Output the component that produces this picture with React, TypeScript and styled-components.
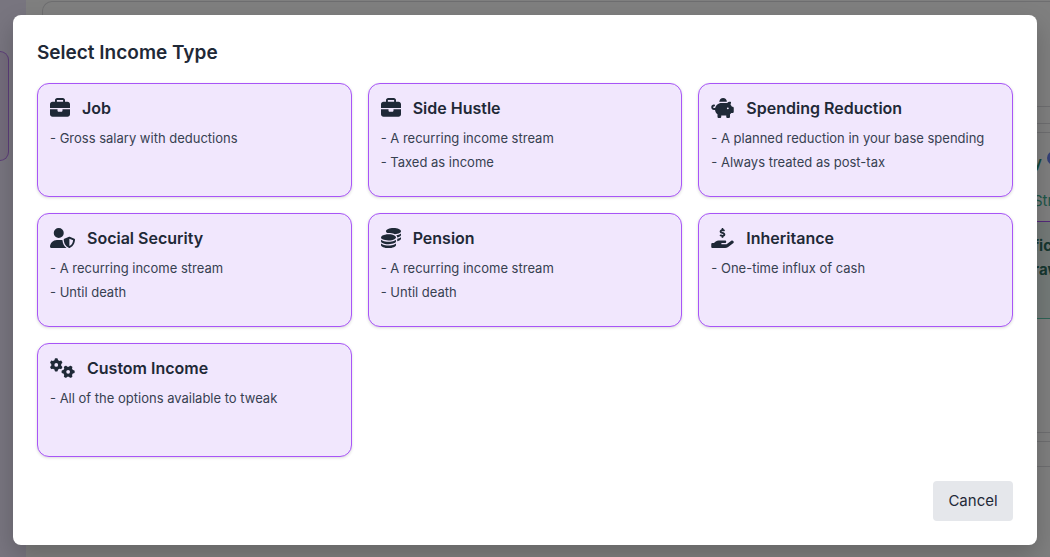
import React from "react";
import styled, { createGlobalStyle } from "styled-components";
import {
  FaBriefcase,
  FaCoins,
  FaGears,
  FaHandHoldingDollar,
  FaPiggyBank,
  FaUserShield,
} from "react-icons/fa6";
import type { IconType } from "react-icons";

const GlobalStyle = createGlobalStyle`
  *, *::before, *::after { box-sizing: border-box; }
  body {
    margin: 0;
    font-family: Inter, "Liberation Sans", sans-serif;
    color: #1f2937;
    background: #ffffff;
  }
  button { font: inherit; color: inherit; }
  h1, h2, p, ul { margin: 0; padding: 0; }
`;

const Screen = styled.div`
  position: relative;
  display: flex;
  min-height: 100vh;
  overflow: hidden;
`;

/* Planner page that stays visible around the dialog */
const Planner = styled.div`
  position: absolute;
  inset: 0;
  display: flex;
  overflow: hidden;
`;

const Sidebar = styled.aside`
  flex: none;
  width: 26px;
  padding-top: 51px;
  background: #f1ebff;
`;

const SidebarCard = styled.div`
  width: 9px;
  height: 110px;
  border: 1px solid #b878f2;
  border-left: 0;
  border-radius: 0 10px 10px 0;
  background: #e8d8f8;
`;

const Board = styled.main`
  flex: 1;
  min-width: 0;
  padding: 1px 0 0 16px;
`;

const Panel = styled.section<{ $height: number }>`
  display: flex;
  justify-content: flex-end;
  height: ${(p) => p.$height}px;
  margin-bottom: 8px;
  border: 1px solid #dcdce0;
  border-right: 0;
  border-radius: 10px 0 0 10px;
`;

const Divider = styled.div`
  height: 1px;
  margin: 16px 0 8px;
  background: #dcdce0;
`;

const Plan = styled.div`
  width: 17px;
  white-space: nowrap;
  color: #3fae92;
  font-size: 15px;
  line-height: 24px;
`;

const PlanTitle = styled.p`
  display: flex;
  gap: 5px;
  padding-top: 18px;
  color: #2c8f76;
  font-weight: 600;
`;

const InfoDot = styled.span`
  flex: none;
  width: 14px;
  height: 14px;
  border-radius: 50%;
  background: #6b82f0;
`;

const PlanLabel = styled.p`
  padding: 14px 0 8px;
`;

const PlanCard = styled.div`
  height: 98px;
  padding-top: 12px;
  border-top: 1px solid #a855f7;
  border-bottom: 1px solid #5cc9ac;
  background: #e9f5f1;
  color: #2f6f60;
  font-weight: 700;
`;

const Overlay = styled.div`
  position: relative;
  flex: 1;
  display: flex;
  align-items: center;
  justify-content: center;
  padding: 15px 13px 12px;
  background: rgba(0, 0, 0, 0.5);
`;

const Dialog = styled.section`
  width: 100%;
  max-width: 1024px;
  padding: 24px;
  border-radius: 8px;
  background: #ffffff;
  box-shadow: 0 10px 24px rgba(0, 0, 0, 0.2);
`;

const DialogTitle = styled.h1`
  margin-bottom: 16px;
  font-size: 19px;
  line-height: 28px;
  font-weight: 600;
`;

const TypeGrid = styled.div`
  display: grid;
  grid-template-columns: repeat(3, minmax(0, 1fr));
  grid-auto-rows: minmax(114px, auto);
  gap: 16px;
`;

const TypeCard = styled.button`
  display: flex;
  flex-direction: column;
  justify-content: flex-start;
  padding: 12px;
  border: 1px solid #a855f7;
  border-radius: 12px;
  background: #f1e7fd;
  box-shadow: 0 1px 3px rgba(0, 0, 0, 0.15);
  text-align: left;
  cursor: pointer;
`;

const TypeHeader = styled.span<{ $iconWidth: number }>`
  display: flex;
  align-items: center;
  gap: 12px;
  margin-bottom: 6px;
  font-size: 16px;
  line-height: 24px;
  font-weight: 600;

  svg {
    flex: none;
    width: ${(p) => p.$iconWidth}px;
    height: 20px;
  }
`;

const TypeNote = styled.span`
  color: #374151;
  font-size: 13px;
  line-height: 24px;
`;

const DialogActions = styled.div`
  display: flex;
  justify-content: flex-end;
  margin-top: 24px;
`;

const CancelButton = styled.button`
  min-width: 80px;
  padding: 8px 12px;
  border: 0;
  border-radius: 4px;
  background: #e5e7eb;
  font-size: 15px;
  line-height: 24px;
  cursor: pointer;
`;

interface IncomeType {
  name: string;
  icon: IconType;
  iconWidth: number;
  notes: string[];
}

const incomeTypes: IncomeType[] = [
  { name: "Job", icon: FaBriefcase, iconWidth: 20, notes: ["Gross salary with deductions"] },
  {
    name: "Side Hustle",
    icon: FaBriefcase,
    iconWidth: 20,
    notes: ["A recurring income stream", "Taxed as income"],
  },
  {
    name: "Spending Reduction",
    icon: FaPiggyBank,
    iconWidth: 23,
    notes: ["A planned reduction in your base spending", "Always treated as post-tax"],
  },
  {
    name: "Social Security",
    icon: FaUserShield,
    iconWidth: 25,
    notes: ["A recurring income stream", "Until death"],
  },
  { name: "Pension", icon: FaCoins, iconWidth: 20, notes: ["A recurring income stream", "Until death"] },
  { name: "Inheritance", icon: FaHandHoldingDollar, iconWidth: 23, notes: ["One-time influx of cash"] },
  { name: "Custom Income", icon: FaGears, iconWidth: 25, notes: ["All of the options available to tweak"] },
];

export default function App() {
  return (
    <>
      <GlobalStyle />
      <Screen>
        <Planner aria-hidden="true">
          <Sidebar>
            <SidebarCard />
          </Sidebar>
          <Board>
            <Panel $height={106} />
            <Divider />
            <Panel $height={301}>
              <Plan>
                <PlanTitle>
                  y<InfoDot />
                </PlanTitle>
                <PlanLabel>Str</PlanLabel>
                <PlanCard>
                  <p>fic</p>
                  <p>raw</p>
                </PlanCard>
              </Plan>
            </Panel>
            <Panel $height={26} />
          </Board>
        </Planner>
        <Overlay>
          <Dialog role="dialog" aria-modal="true" aria-labelledby="income-type-title">
            <DialogTitle id="income-type-title">Select Income Type</DialogTitle>
            <TypeGrid>
              {incomeTypes.map(({ name, icon: Icon, iconWidth, notes }) => (
                <TypeCard key={name} type="button">
                  <TypeHeader $iconWidth={iconWidth}>
                    <Icon aria-hidden="true" />
                    {name}
                  </TypeHeader>
                  {notes.map((note) => (
                    <TypeNote key={note}>- {note}</TypeNote>
                  ))}
                </TypeCard>
              ))}
            </TypeGrid>
            <DialogActions>
              <CancelButton type="button">Cancel</CancelButton>
            </DialogActions>
          </Dialog>
        </Overlay>
      </Screen>
    </>
  );
}
